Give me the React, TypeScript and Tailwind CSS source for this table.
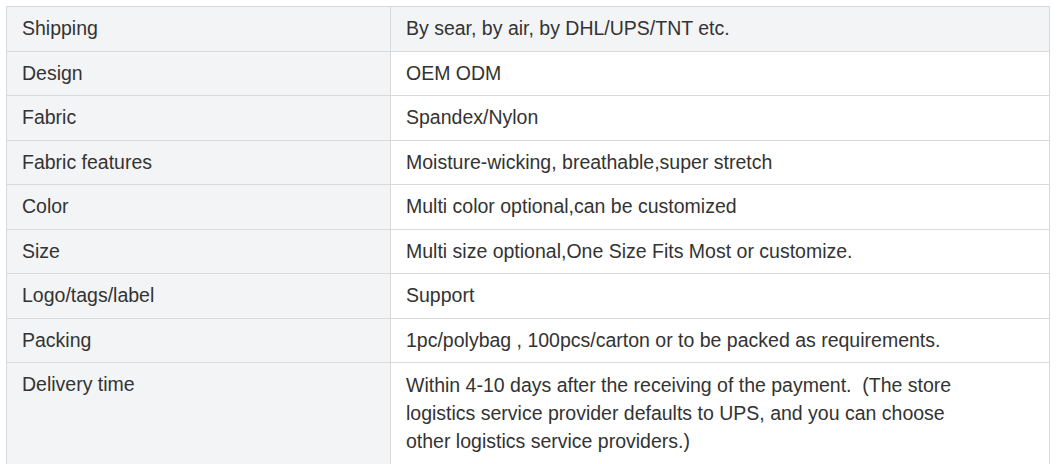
const specs: { label: string; value: React.ReactNode }[] = [
  { label: "Shipping", value: "By sear, by air, by DHL/UPS/TNT etc." },
  { label: "Design", value: "OEM ODM" },
  { label: "Fabric", value: "Spandex/Nylon" },
  { label: "Fabric features", value: "Moisture-wicking, breathable,super stretch" },
  { label: "Color", value: "Multi color optional,can be customized" },
  { label: "Size", value: "Multi size optional,One Size Fits Most or customize." },
  { label: "Logo/tags/label", value: "Support" },
  { label: "Packing", value: "1pc/polybag , 100pcs/carton or to be packed as requirements." },
  {
    label: "Delivery time",
    value: (
      <>
        Within 4-10 days after the receiving of the payment.&nbsp; (The store
        <br />
        logistics service provider defaults to UPS, and you can choose
        <br />
        other logistics service providers.)
      </>
    ),
  },
];

export default function App() {
  return (
    <div className="min-h-screen bg-white pl-[6px] pt-[6px] font-['Liberation_Sans',Arial,sans-serif] text-[19.5px] leading-[27.5px] text-[#333]">
      <table className="w-[1044px] table-fixed border-collapse">
        <tbody>
          {specs.map((row, i) => {
            const last = i === specs.length - 1;
            return (
              <tr key={row.label}>
                <td
                  className={
                    last
                      ? "w-[384px] border border-[#d9d9d9] bg-[#f3f4f6] px-[15px] pt-[8px] pb-[16px] align-top"
                      : "w-[384px] border border-[#d9d9d9] bg-[#f3f4f6] px-[15px] py-[8px] align-top"
                  }
                >
                  {row.label}
                </td>
                <td
                  className={
                    i === 0
                      ? "border border-[#d9d9d9] bg-[#f3f4f6] px-[15px] py-[8px] align-top"
                      : last
                        ? "border border-[#d9d9d9] bg-white px-[15px] pt-[8px] pb-[16px] align-top leading-[28px]"
                        : "border border-[#d9d9d9] bg-white px-[15px] py-[8px] align-top"
                  }
                >
                  {row.value}
                </td>
              </tr>
            );
          })}
        </tbody>
      </table>
    </div>
  );
}
